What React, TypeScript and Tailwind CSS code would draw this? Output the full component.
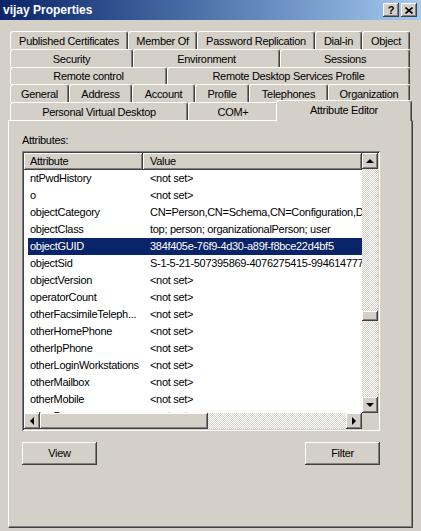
import React from 'react'

const raised =
  'bg-[#d4d0c8] shadow-[inset_-1px_-1px_#404040,inset_1px_1px_#ffffff,inset_-2px_-2px_#808080,inset_2px_2px_#d4d0c8]'
const sunken =
  'shadow-[inset_1px_1px_#808080,inset_-1px_-1px_#ffffff,inset_2px_2px_#404040,inset_-2px_-2px_#d4d0c8]'
const checker =
  '[background-image:repeating-conic-gradient(#ffffff_0%_25%,#d4d0c8_0%_50%)] [background-size:2px_2px]'

const tabRows = [
  [
    { label: 'Published Certificates', w: 'w-[118px]' },
    { label: 'Member Of', w: 'w-[69px]' },
    { label: 'Password Replication', w: 'w-[118px]' },
    { label: 'Dial-in', w: 'w-[47px]' },
    { label: 'Object', w: 'w-[48px]' },
  ],
  [
    { label: 'Security', w: 'w-[123px]' },
    { label: 'Environment', w: 'w-[147px]' },
    { label: 'Sessions', w: 'w-[130px]' },
  ],
  [
    { label: 'Remote control', w: 'w-[157px]' },
    { label: 'Remote Desktop Services Profile', w: 'w-[243px]' },
  ],
  [
    { label: 'General', w: 'w-[59px]' },
    { label: 'Address', w: 'w-[63px]' },
    { label: 'Account', w: 'w-[63px]' },
    { label: 'Profile', w: 'w-[54px]' },
    { label: 'Telephones', w: 'w-[79px]' },
    { label: 'Organization', w: 'w-[82px]' },
  ],
]

const attributes = [
  ['ntPwdHistory', '<not set>'],
  ['o', '<not set>'],
  ['objectCategory', 'CN=Person,CN=Schema,CN=Configuration,DC=contoso,DC=com'],
  ['objectClass', 'top; person; organizationalPerson; user'],
  ['objectGUID', '384f405e-76f9-4d30-a89f-f8bce22d4bf5'],
  ['objectSid', 'S-1-5-21-507395869-4076275415-994614777-1104'],
  ['objectVersion', '<not set>'],
  ['operatorCount', '<not set>'],
  ['otherFacsimileTeleph...', '<not set>'],
  ['otherHomePhone', '<not set>'],
  ['otherIpPhone', '<not set>'],
  ['otherLoginWorkstations', '<not set>'],
  ['otherMailbox', '<not set>'],
  ['otherMobile', '<not set>'],
  ['otherPager', '<not set>'],
]

function Tab({ label, w }: { label: string; w: string }) {
  return (
    <div
      className={`${w} h-full flex items-center justify-center pt-[1px] rounded-t-[3px] border-t border-l border-white border-r border-r-[#404040] shadow-[inset_-1px_0_#808080] bg-[#d4d0c8] whitespace-nowrap`}
    >
      {label}
    </div>
  )
}

function Arrow({ dir }: { dir: 'up' | 'down' | 'left' | 'right' }) {
  const pts = {
    up: '4,0 8,4 0,4',
    down: '0,0 8,0 4,4',
    left: '4,0 4,8 0,4',
    right: '0,0 4,4 0,8',
  }[dir]
  const vertical = dir === 'up' || dir === 'down'
  return (
    <div className={`${raised} w-[16px] h-[16px] flex items-center justify-center shrink-0`}>
      <svg width={vertical ? 8 : 4} height={vertical ? 4 : 8} viewBox={vertical ? '0 0 8 4' : '0 0 4 8'}>
        <polygon points={pts} fill="#000" />
      </svg>
    </div>
  )
}

export default function App() {
  return (
    <div className="w-[421px] h-[531px] bg-[#d4d0c8] overflow-hidden font-['Liberation_Sans',Arial,sans-serif] text-[11px] tracking-[-0.3px] text-black leading-[13px]">
      {/* Title bar */}
      <div className="h-[20px] bg-linear-to-r from-[#0a246a] to-[#a6caf0] flex items-center justify-between pl-[3px] pr-[4px]">
        <span className="text-white font-bold text-[12px] tracking-normal">vijay Properties</span>
        <div className="flex gap-[2px]">
          <div className={`${raised} w-[16px] h-[14px] flex items-center justify-center font-bold text-[11px] tracking-normal leading-none`}>
            ?
          </div>
          <div className={`${raised} w-[16px] h-[14px] flex items-center justify-center`}>
            <svg width="8" height="7" viewBox="0 0 8 7">
              <path d="M0.5 0.5 L7.5 6.5 M7.5 0.5 L0.5 6.5" stroke="#000" strokeWidth="1.6" />
            </svg>
          </div>
        </div>
      </div>

      <div className="pl-[8px] pt-[11px]">
        {/* Tab rows */}
        <div className="pl-[2px]">
          {tabRows.map((row, i) => (
            <div key={i} className={`flex w-[400px] ${i === 2 ? 'h-[17px]' : 'h-[18px]'}`}>
              {row.map((t) => (
                <Tab key={t.label} label={t.label} w={t.w} />
              ))}
            </div>
          ))}
          <div className="flex w-[400px] h-[18px] items-end">
            <Tab label="Personal Virtual Desktop" w="w-[178px]" />
            <Tab label="COM+" w="w-[90px]" />
            <div className="relative z-10 -mx-[2px] -mb-[1px] w-[136px] h-[21px] flex justify-center pt-[3px] rounded-t-[3px] border-t border-l border-white border-r border-r-[#404040] shadow-[inset_-1px_0_#808080] bg-[#d4d0c8]">
              Attribute Editor
            </div>
          </div>
        </div>

        {/* Panel */}
        <div className="w-[405px] h-[408px] border-t border-l border-white border-r border-b border-r-[#404040] border-b-[#404040] shadow-[inset_-1px_-1px_#808080] pl-[13px] pt-[13px]">
          <div>Attributes:</div>
          <div className={`${sunken} mt-[4px] w-[358px] h-[280px] p-[2px] bg-white`}>
            <div className="flex h-[260px]">
              <div className="w-[338px] overflow-hidden">
                <div className="flex h-[17px]">
                  <div className={`${raised} w-[119px] pl-[6px] flex items-center`}>Attribute</div>
                  <div className={`${raised} flex-1 pl-[7px] flex items-center`}>Value</div>
                </div>
                <div className="h-[243px] overflow-hidden">
                  {attributes.map(([name, value]) => {
                    const sel = name === 'objectGUID'
                    return (
                      <div key={name} className="flex h-[17px] items-center whitespace-nowrap">
                        <div
                          className={`flex h-full items-center w-[700px] ml-[4px] ${sel ? 'bg-[#0a246a] text-white' : ''}`}
                        >
                          <div className="w-[115px] pl-[2px] shrink-0 overflow-hidden">{name}</div>
                          <div className="pl-[7px]">{value}</div>
                        </div>
                      </div>
                    )
                  })}
                </div>
              </div>
              {/* vertical scrollbar */}
              <div className="w-[16px] flex flex-col">
                <Arrow dir="up" />
                <div className={`${checker} flex-1`}>
                  <div className={`${raised} h-[10px] mt-[142px]`} />
                </div>
                <Arrow dir="down" />
              </div>
            </div>
            {/* horizontal scrollbar */}
            <div className="flex h-[16px]">
              <div className="w-[338px] flex">
                <Arrow dir="left" />
                <div className={`${checker} flex-1 flex`}>
                  <div className={`${raised} w-[168px] h-full`} />
                </div>
                <Arrow dir="right" />
              </div>
              <div className="w-[16px] bg-[#d4d0c8]" />
            </div>
          </div>

          <div className="mt-[11px] w-[358px] flex justify-between">
            <div className={`${raised} w-[75px] h-[23px] flex items-center justify-center`}>View</div>
            <div className={`${raised} w-[75px] h-[23px] flex items-center justify-center`}>Filter</div>
          </div>
        </div>
      </div>
    </div>
  )
}
